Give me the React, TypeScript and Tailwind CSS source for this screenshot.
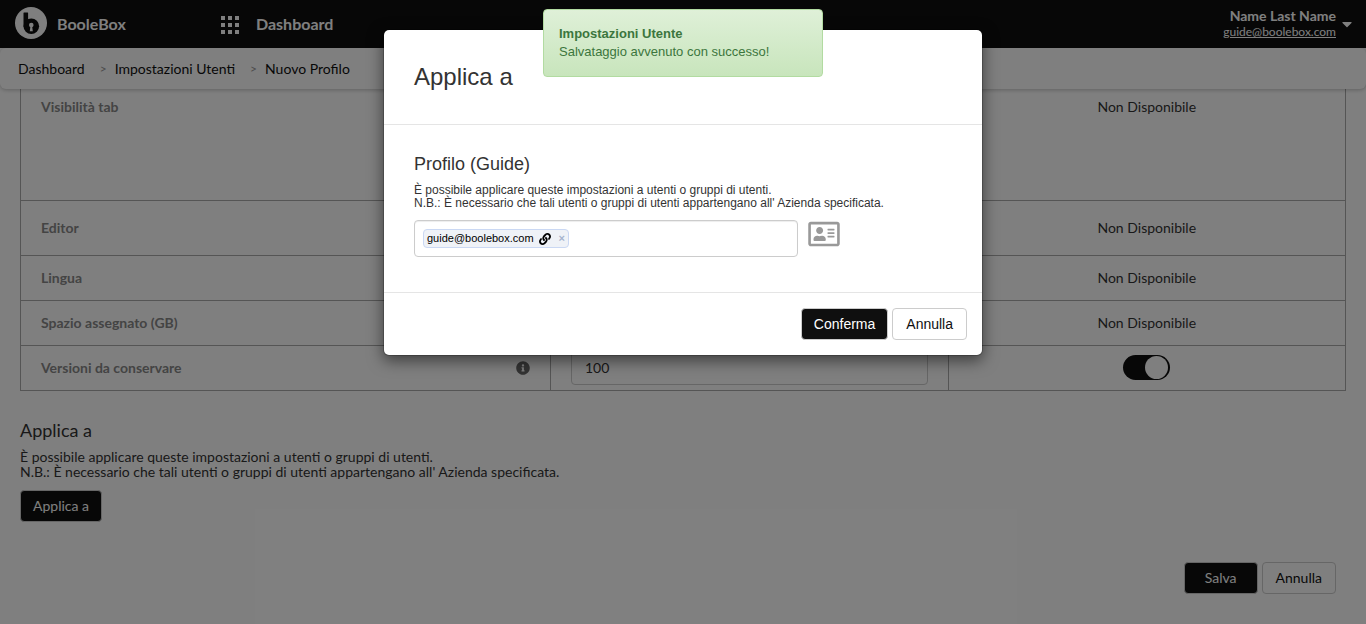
import { useState } from "react";
import type { ButtonHTMLAttributes, ReactNode } from "react";
import { clsx } from "clsx";
import { FaCaretDown, FaInfoCircle, FaLink, FaRegAddressCard } from "react-icons/fa";

const crumbs = ["Dashboard", "Impostazioni Utenti", "Nuovo Profilo"];

export default function App() {
  const [isModalOpen, setIsModalOpen] = useState(true);

  return (
    <div className="relative min-h-screen overflow-hidden bg-white font-['Lato',sans-serif] text-sm text-[#333]">
      <SiteHeader />
      <Breadcrumb />

      <main className="px-5">
        <SettingsTable />

        <section className="mt-[29px]">
          <h2 className="text-lg leading-5">Applica a</h2>
          <p className="mt-[9px] leading-[15px]">
            È possibile applicare queste impostazioni a utenti o gruppi di utenti.
            <br />
            N.B.: È necessario che tali utenti o gruppi di utenti appartengano all' Azienda specificata.
          </p>
          <Button dark className="mt-[11px]" onClick={() => setIsModalOpen(true)}>
            Applica a
          </Button>
        </section>

        <div className="mt-10 flex justify-end gap-1 pr-[10px] pb-[30px]">
          <Button dark className="px-5">
            Salva
          </Button>
          <Button>Annulla</Button>
        </div>
      </main>

      {isModalOpen ? (
        <div className="absolute inset-0 bg-black/50">
          <ApplyModal onClose={() => setIsModalOpen(false)} />
        </div>
      ) : null}
      <Toast />
    </div>
  );
}

function SiteHeader() {
  return (
    <header className="flex h-12 items-center bg-[#0f0f0f] pr-[14px] pl-[15px] text-white">
      <a href="#" className="flex w-[205px] items-center gap-[10px] text-base font-bold">
        <Logo />
        <span>BooleBox</span>
      </a>
      <a href="#" className="flex items-center gap-4 text-base font-bold">
        <AppsIcon />
        <span>Dashboard</span>
      </a>
      <button type="button" className="ml-auto flex items-center gap-[6px] text-right">
        <span className="flex flex-col">
          <span className="text-sm leading-4 font-bold">Name Last Name</span>
          <span className="text-xs leading-4 underline">guide@boolebox.com</span>
        </span>
        <FaCaretDown className="h-4 w-[10px]" />
      </button>
    </header>
  );
}

function Breadcrumb() {
  return (
    <nav aria-label="Breadcrumb" className="relative rounded-md bg-white px-[18px] py-[10px] shadow-[0_1px_4px_rgba(0,0,0,0.25)]">
      <ol className="flex items-center text-sm leading-[21px] text-[#0f0f0f]">
        {crumbs.map((crumb, index) => (
          <li key={crumb} className="flex items-center">
            {index > 0 ? <span className="mr-2 ml-[15px] text-xs text-[#999]">&gt;</span> : null}
            <a href="#">{crumb}</a>
          </li>
        ))}
      </ol>
    </nav>
  );
}

function SettingsTable() {
  return (
    <table className="w-full table-fixed border-collapse border border-t-0 border-[#aaa]">
      <colgroup>
        <col className="w-2/5" />
        <col className="w-3/10" />
        <col className="w-3/10" />
      </colgroup>
      <tbody>
        <SettingRow label="Visibilità tab" height="h-[111px]" top />
        <SettingRow label="Editor" height="h-[55px]" />
        <SettingRow label="Lingua" height="h-[45px]" />
        <SettingRow label="Spazio assegnato (GB)" height="h-[45px]" />
        <tr className="h-[45px] border-b border-[#aaa]">
          <th scope="row" className="border-r border-[#aaa] px-5 text-left font-bold text-[#888]">
            <label htmlFor="versions" className="flex items-center justify-between">
              Versioni da conservare
              <FaInfoCircle className="h-[14px] w-[14px] text-[#666]" />
            </label>
          </th>
          <td className="border-r border-[#aaa] px-5">
            <input
              id="versions"
              defaultValue="100"
              className="block h-[34px] w-full rounded border border-[#ccc] bg-transparent px-[13px] text-[#333]"
            />
          </td>
          <td>
            <Toggle />
          </td>
        </tr>
      </tbody>
    </table>
  );
}

function SettingRow({ label, height, top = false }: { label: string; height: string; top?: boolean }) {
  return (
    <tr className={clsx("border-b border-[#aaa]", height, top && "align-top")}>
      <th scope="row" className={clsx("border-r border-[#aaa] px-5 text-left font-bold text-[#888]", top && "pt-2")}>
        {label}
      </th>
      <td className="border-r border-[#aaa]" />
      <td className={clsx("text-center", top && "pt-2")}>Non Disponibile</td>
    </tr>
  );
}

function Toggle() {
  return (
    <label className="relative mx-auto block h-[25px] w-[47px]">
      <input type="checkbox" defaultChecked aria-label="Versioni da conservare" className="peer sr-only" />
      <span className="flex h-full items-center rounded-full bg-[#ccc] p-px peer-checked:justify-end peer-checked:bg-[#0f0f0f]">
        <span className="mr-px h-[23px] w-[23px] rounded-full bg-white" />
      </span>
    </label>
  );
}

function ApplyModal({ onClose }: { onClose: () => void }) {
  const [users, setUsers] = useState(["guide@boolebox.com"]);

  return (
    <div
      role="dialog"
      aria-labelledby="apply-title"
      className="mx-auto mt-[29px] max-w-[600px] rounded-md border border-black/20 bg-white bg-clip-padding font-['Liberation_Sans',Arial,sans-serif] shadow-[0_5px_15px_rgba(0,0,0,0.5)]"
    >
      <div className="border-b border-[#e5e5e5] px-[30px] pt-8 pb-8">
        <h1 id="apply-title" className="text-2xl leading-[30px]">
          Applica a
        </h1>
      </div>

      <div className="px-[30px] pt-[29px] pb-[35px]">
        <h2 className="text-lg leading-5">Profilo (Guide)</h2>
        <p className="mt-[10px] text-xs leading-[13px]">
          È possibile applicare queste impostazioni a utenti o gruppi di utenti.
          <br />
          N.B.: È necessario che tali utenti o gruppi di utenti appartengano all' Azienda specificata.
        </p>
        <div className="mt-[10px] flex items-start gap-[10px]">
          <div className="flex h-[37px] w-96 items-center gap-1 rounded border border-[#ccc] px-2 shadow-[inset_0_1px_1px_rgba(0,0,0,0.075)]">
            {users.map((user) => (
              <span key={user} className="flex h-[19px] items-center rounded border border-[#cad8f3] bg-[#eff2f7] px-[3px] text-[11px] text-black">
                {user}
                <FaLink className="ml-[5px] h-3 w-3" />
                <button
                  type="button"
                  aria-label={`Rimuovi ${user}`}
                  className="ml-2 text-[11px] font-bold text-[#a6b4ce]"
                  onClick={() => setUsers(users.filter((item) => item !== user))}
                >
                  ×
                </button>
              </span>
            ))}
            <input aria-label="Utenti o gruppi" className="h-full min-w-0 flex-1 outline-none" />
          </div>
          <button type="button" aria-label="Rubrica" className="text-[#999]">
            <FaRegAddressCard className="h-7 w-8" />
          </button>
        </div>
      </div>

      <div className="flex justify-end gap-1 border-t border-[#e5e5e5] p-[15px]">
        <Button dark onClick={onClose}>
          Conferma
        </Button>
        <Button onClick={onClose}>Annulla</Button>
      </div>
    </div>
  );
}

function Toast() {
  return (
    <div
      role="status"
      className="absolute inset-x-0 top-[9px] mx-auto h-[68px] w-[280px] rounded border border-[#b2dba1] bg-linear-to-b from-[#dff0d8] to-[#c8e5bc] p-[15px] font-['Liberation_Sans',Arial,sans-serif] text-[13px] leading-[18px] text-[#3c763d]"
    >
      <strong className="block">Impostazioni Utente</strong>
      Salvataggio avvenuto con successo!
    </div>
  );
}

type ButtonProps = ButtonHTMLAttributes<HTMLButtonElement> & { dark?: boolean; children: ReactNode };

function Button({ dark = false, className, children, ...props }: ButtonProps) {
  return (
    <button
      type="button"
      className={clsx(
        "h-8 rounded border border-[#ccc] text-sm",
        dark ? "bg-[#0f0f0f] text-white" : "bg-white text-[#0f0f0f]",
        className ?? "",
        !className?.includes("px-") && (dark ? "px-3" : "px-[13px]"),
      )}
      {...props}
    >
      {children}
    </button>
  );
}

function Logo() {
  return (
    <svg viewBox="0 0 32 32" className="-mt-[2px] h-8 w-8" aria-hidden="true">
      <circle cx="16" cy="16" r="16" fill="#fff" />
      <rect x="8.500" y="5.500" width="4.600" height="14" rx="0.500" fill="#0f0f0f" />
      <circle cx="16.300" cy="19.200" r="7.800" fill="#0f0f0f" />
      <circle cx="16.300" cy="18" r="2.300" fill="#fff" />
      <path d="M15.500 18.500h1.600l.7 5.700h-3z" fill="#fff" />
    </svg>
  );
}

function AppsIcon() {
  return (
    <svg viewBox="0 0 20 20" className="mt-1 h-5 w-5" fill="currentColor" aria-hidden="true">
      {[0, 7, 14].map((y) => [1, 8, 15].map((x) => <rect key={`${x}-${y}`} x={x} y={y} width="4" height="4" />))}
    </svg>
  );
}
